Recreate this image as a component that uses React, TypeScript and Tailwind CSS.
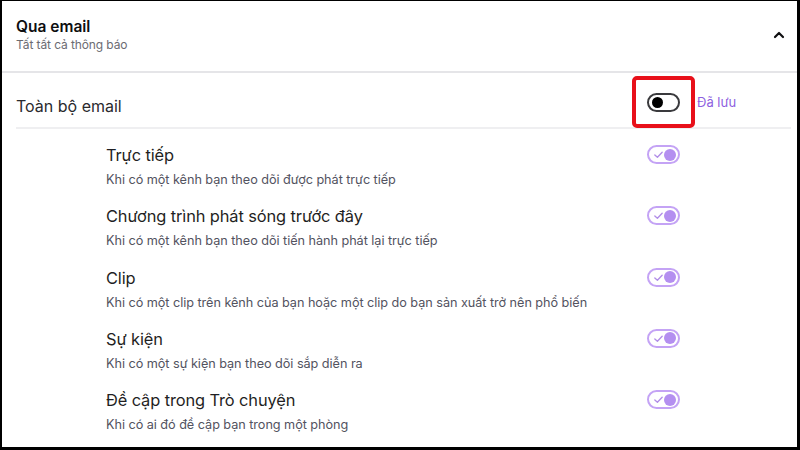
const items = [
  { title: "Trực tiếp", desc: "Khi có một kênh bạn theo dõi được phát trực tiếp" },
  { title: "Chương trình phát sóng trước đây", desc: "Khi có một kênh bạn theo dõi tiến hành phát lại trực tiếp" },
  { title: "Clip", desc: "Khi có một clip trên kênh của bạn hoặc một clip do bạn sản xuất trở nên phổ biến" },
  { title: "Sự kiện", desc: "Khi có một sự kiện bạn theo dõi sắp diễn ra" },
  { title: "Đề cập trong Trò chuyện", desc: "Khi có ai đó đề cập bạn trong một phòng" },
];

function ToggleOn() {
  return (
    <div className="w-[33px] h-[19px] rounded-full border-2 border-[#c4a3f5] flex items-center justify-between px-[2px]">
      <svg width="11" height="11" viewBox="0 0 12 12" className="ml-[2px]">
        <path d="M2 6.5 L4.8 9 L10 3.5" fill="none" stroke="#b28ee8" strokeWidth="1.5" strokeLinecap="round" strokeLinejoin="round" />
      </svg>
      <div className="w-[12px] h-[12px] rounded-full bg-[#b48ff0]" />
    </div>
  );
}

function ToggleOff() {
  return (
    <div className="w-[33px] h-[19px] rounded-full border-2 border-[#3a3a3d] flex items-center px-[3px]">
      <div className="w-[11px] h-[11px] rounded-full bg-black" />
    </div>
  );
}

export default function App() {
  return (
    <div className="w-[800px] h-[450px] bg-white border-t border-l-2 border-r-[3px] border-b-[3px] border-black overflow-hidden font-['Inter',sans-serif] text-[#0e0e10]">
      {/* header */}
      <div className="h-[70px] flex justify-between pl-[14px] pr-[12px]">
        <div className="pt-[15px]">
          <div className="text-[15.5px] leading-[22px] font-semibold">Qua email</div>
          <div className="text-[12px] leading-[14px] text-[#6b6b72] tracking-[-0.1px]">Tất tất cả thông báo</div>
        </div>
        <svg width="12" height="10" viewBox="0 0 12 10" className="mt-[29px]">
          <path d="M2 7 L6 3 L10 7" fill="none" stroke="#0e0e10" strokeWidth="2.2" strokeLinecap="round" strokeLinejoin="round" />
        </svg>
      </div>
      <div className="h-[2px] bg-[#e5e5e8]" />

      {/* all email */}
      <div className="h-[54px] flex items-center pl-[14px]">
        <div className="text-[16px] leading-[22px] text-[#2a2a2e] pt-[12px] flex-1">Toàn bộ email</div>
        <div className="w-[63px] h-[52px] mt-[4px] border-[4px] border-[#e8101a] rounded-[5px] flex items-center justify-center">
          <ToggleOff />
        </div>
        <div className="text-[13px] text-[#8d5fe0] w-[102px] pl-[2px] pt-[6px]">Đã lưu</div>
      </div>
      <div className="h-[2px] bg-[#efeff1] ml-[14px] mr-[6px]" />

      {/* items */}
      <div className="pl-[104px] pr-[117px]">
        {items.map((it) => (
          <div key={it.title} className="h-[61.3px] flex justify-between">
            <div className="pt-[15px]">
              <div className="text-[16.4px] leading-[22px] text-[#1f1f23] tracking-[-0.1px]">{it.title}</div>
              <div className="text-[12.7px] leading-[18px] text-[#53535f] mt-[5px] tracking-[-0.05px]">{it.desc}</div>
            </div>
            <div className="pt-[16px]">
              <ToggleOn />
            </div>
          </div>
        ))}
      </div>
    </div>
  );
}
